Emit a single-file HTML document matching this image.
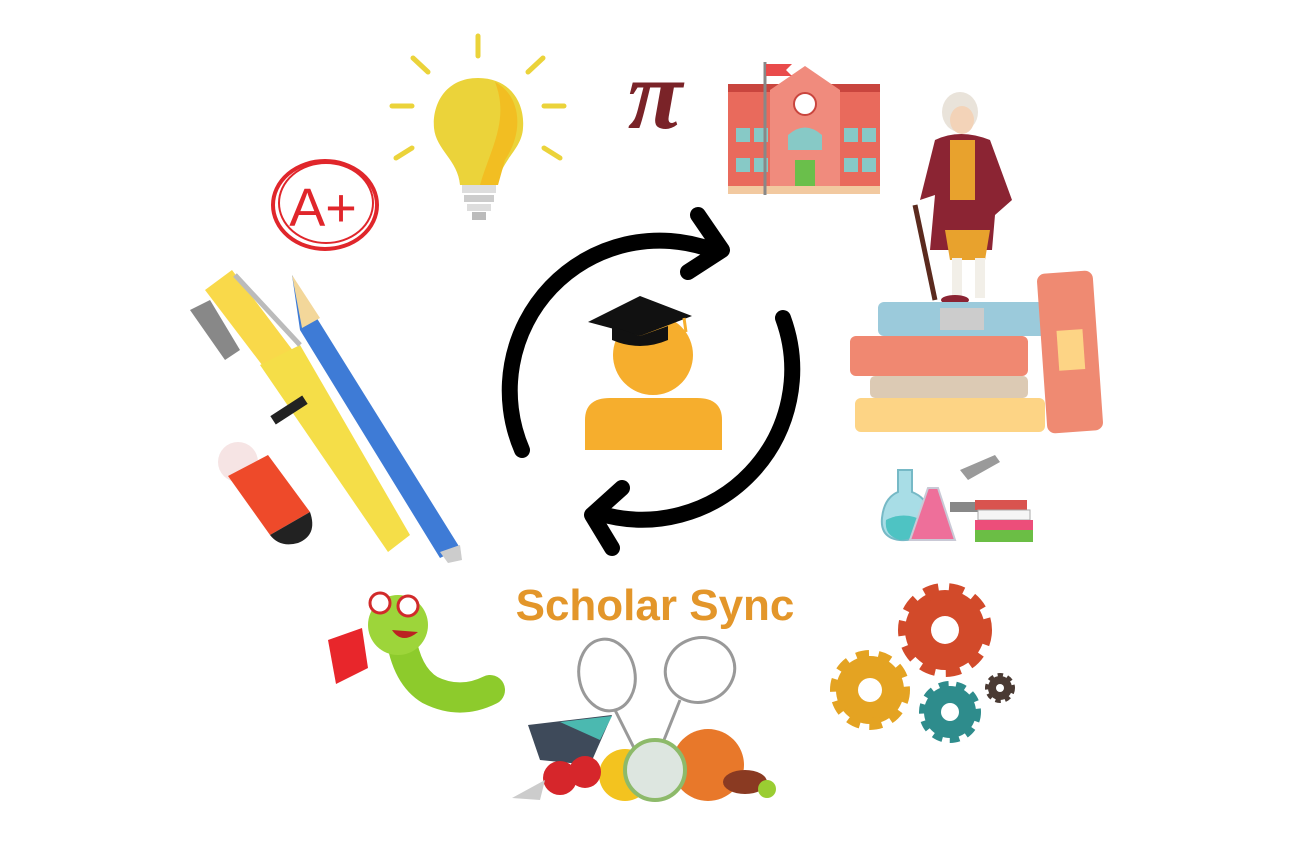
<!DOCTYPE html>
<html><head><meta charset="utf-8"><style>
html,body{margin:0;padding:0;background:#fff;width:1310px;height:865px;overflow:hidden}
svg{display:block}
</style></head><body>
<svg width="1310" height="865" viewBox="0 0 1310 865" xmlns="http://www.w3.org/2000/svg">
<rect width="1310" height="865" fill="#fff"/>

<!-- central arrows -->
<g fill="none" stroke="#000" stroke-width="16" stroke-linecap="round" stroke-linejoin="round">
<path d="M522,450 A150,150 0 0 1 712,250"/>
<path d="M698,215 L722,250 L688,272"/>
<path d="M783,318 A150,150 0 0 1 598,513"/>
<path d="M622,488 L592,515 L612,548"/>
</g>
<!-- person -->
<circle cx="653" cy="355" r="40" fill="#F6AE2D"/>
<path d="M585,450 V420 Q585,398 610,398 H697 Q722,398 722,420 V450 Z" fill="#F6AE2D"/>
<polygon points="588,322 640,296 692,316 640,336" fill="#111"/>
<path d="M612,326 L612,340 Q640,352 668,340 L668,326 L640,336Z" fill="#111"/>
<path d="M684,318 L686,332" stroke="#F6AE2D" stroke-width="3"/>

<!-- title -->
<text x="655" y="620" text-anchor="middle" font-family="Liberation Sans, sans-serif" font-weight="bold" font-size="44" fill="#E3962A">Scholar Sync</text>

<!-- lightbulb -->
<g stroke="#EBD33A" stroke-width="5" stroke-linecap="round">
<line x1="478" y1="36" x2="478" y2="56"/><line x1="413" y1="58" x2="428" y2="72"/><line x1="543" y1="58" x2="528" y2="72"/>
<line x1="392" y1="106" x2="412" y2="106"/><line x1="544" y1="106" x2="564" y2="106"/>
<line x1="396" y1="158" x2="412" y2="148"/><line x1="560" y1="158" x2="544" y2="148"/>
</g>
<path d="M478,78 C445,78 432,105 434,128 C436,150 458,160 460,185 H498 C500,160 522,150 523,128 C525,105 512,78 478,78Z" fill="#EBD33A"/>
<path d="M495,82 C520,95 525,130 505,160 L498,185 H480 C490,150 510,120 495,82Z" fill="#F2BE22"/>
<rect x="462" y="185" width="34" height="8" fill="#ddd"/><rect x="464" y="195" width="30" height="7" fill="#ccc"/><rect x="467" y="204" width="24" height="7" fill="#ddd"/><rect x="472" y="212" width="14" height="8" fill="#bbb"/>

<!-- A+ -->
<ellipse cx="325" cy="205" rx="52" ry="44" fill="none" stroke="#E0262B" stroke-width="4"/>
<ellipse cx="326" cy="203" rx="47" ry="40" fill="none" stroke="#E0262B" stroke-width="2"/>
<text x="323" y="226" text-anchor="middle" font-family="Liberation Sans, sans-serif" font-size="54" fill="#E0262B">A+</text>

<!-- pi -->
<text x="655" y="128" text-anchor="middle" font-family="Liberation Serif, serif" font-style="italic" font-weight="bold" font-size="100" fill="#7A2328">π</text>

<!-- school -->
<rect x="728" y="90" width="152" height="96" fill="#E96A5C"/>
<rect x="728" y="84" width="152" height="8" fill="#C9453E"/>
<polygon points="770,90 805,66 840,90" fill="#F08B7D"/>
<rect x="770" y="90" width="70" height="96" fill="#F08B7D"/>
<circle cx="805" cy="104" r="11" fill="#fff" stroke="#C9453E" stroke-width="2"/>
<path d="M788,150 V135 Q805,120 822,135 V150Z" fill="#87C9C6"/>
<rect x="795" y="160" width="20" height="26" fill="#6ABF4B"/>
<rect x="736" y="128" width="14" height="14" fill="#87C9C6"/><rect x="754" y="128" width="14" height="14" fill="#87C9C6"/>
<rect x="844" y="128" width="14" height="14" fill="#87C9C6"/><rect x="862" y="128" width="14" height="14" fill="#87C9C6"/>
<rect x="736" y="158" width="14" height="14" fill="#87C9C6"/><rect x="754" y="158" width="14" height="14" fill="#87C9C6"/>
<rect x="844" y="158" width="14" height="14" fill="#87C9C6"/><rect x="862" y="158" width="14" height="14" fill="#87C9C6"/>
<rect x="728" y="186" width="152" height="8" fill="#F2C9A0"/>
<line x1="765" y1="62" x2="765" y2="195" stroke="#888" stroke-width="3"/>
<path d="M766,64 H792 L786,70 L792,76 H766Z" fill="#E94B4B"/>

<!-- figure -->
<ellipse cx="960" cy="112" rx="18" ry="20" fill="#E9E3DA"/>
<ellipse cx="962" cy="120" rx="12" ry="14" fill="#F3D3B8"/>
<path d="M935,140 Q960,128 990,140 L1012,200 L995,215 L992,250 H930 L935,195 L920,200 Z" fill="#8B2433"/>
<rect x="950" y="140" width="25" height="60" fill="#E8A22D"/>
<path d="M945,230 H990 L985,260 H950Z" fill="#E8A22D"/>
<rect x="952" y="258" width="10" height="40" fill="#F2EFE8"/><rect x="975" y="258" width="10" height="40" fill="#F2EFE8"/>
<ellipse cx="955" cy="300" rx="14" ry="5" fill="#8B2433"/><ellipse cx="990" cy="310" rx="12" ry="5" fill="#8B2433"/>
<line x1="915" y1="205" x2="935" y2="300" stroke="#5B2A1E" stroke-width="5"/>

<!-- books -->
<rect x="878" y="302" width="170" height="34" rx="6" fill="#9BCADB"/>
<rect x="940" y="308" width="44" height="22" fill="#ccc"/>
<rect x="850" y="336" width="178" height="40" rx="6" fill="#F08871"/>
<rect x="870" y="376" width="158" height="22" rx="5" fill="#DCCAB4"/>
<rect x="855" y="398" width="190" height="34" rx="6" fill="#FDD485"/>
<rect x="1042" y="272" width="56" height="160" rx="8" transform="rotate(-4 1070 352)" fill="#EF8A72"/>
<rect x="1058" y="330" width="26" height="40" fill="#FDD485" transform="rotate(-4 1070 352)"/>

<!-- lab -->
<path d="M898,470 H912 V492 Q932,500 928,522 Q920,542 900,540 Q880,538 882,518 Q884,498 898,492Z" fill="#A8DDE6" stroke="#76B9C6" stroke-width="2"/>
<path d="M886,520 Q905,510 926,522 Q918,540 900,540 Q884,536 886,520Z" fill="#4EC3C3"/>
<path d="M928,488 H938 L955,540 H910Z" fill="#EE6F9A" stroke="#C9C9D6" stroke-width="2"/>
<rect x="950" y="502" width="45" height="10" fill="#888"/>
<path d="M960,470 L995,455 L1000,462 L968,480Z" fill="#9A9A9A"/>
<rect x="975" y="500" width="52" height="10" fill="#D9534F"/><rect x="978" y="510" width="52" height="10" fill="#F5F5F5" stroke="#aaa"/>
<rect x="975" y="520" width="58" height="10" fill="#EC4E7A"/><rect x="975" y="530" width="58" height="12" fill="#6BBE45"/>

<!-- gears -->
<g>
<circle cx="945" cy="630" r="40" fill="#D24A2A" stroke="#D24A2A" stroke-width="14" stroke-dasharray="14 10"/>
<circle cx="945" cy="630" r="14" fill="#fff"/>
<circle cx="870" cy="690" r="34" fill="#E4A322" stroke="#E4A322" stroke-width="12" stroke-dasharray="12 9"/>
<circle cx="870" cy="690" r="12" fill="#fff"/>
<circle cx="950" cy="712" r="26" fill="#2E8C8C" stroke="#2E8C8C" stroke-width="10" stroke-dasharray="9 7"/>
<circle cx="950" cy="712" r="9" fill="#fff"/>
<circle cx="1000" cy="688" r="12" fill="#4A3A33" stroke="#4A3A33" stroke-width="6" stroke-dasharray="5 4"/>
<circle cx="1000" cy="688" r="4" fill="#fff"/>
</g>

<!-- sports -->
<g fill="none" stroke="#999" stroke-width="3">
<ellipse cx="607" cy="675" rx="28" ry="36" transform="rotate(-10 607 675)"/>
<ellipse cx="700" cy="670" rx="35" ry="32" transform="rotate(-20 700 670)"/>
<line x1="615" y1="710" x2="635" y2="750"/><line x1="680" y1="700" x2="660" y2="750"/>
</g>
<polygon points="528,725 612,715 590,765 540,760" fill="#3E4A5A"/>
<polygon points="560,722 612,716 600,740" fill="#4BB9B0"/>
<circle cx="708" cy="765" r="36" fill="#E8782A"/>
<circle cx="625" cy="775" r="26" fill="#F3C31F"/>
<circle cx="655" cy="770" r="30" fill="#DDE6E0" stroke="#8DBA6A" stroke-width="4"/>
<circle cx="560" cy="778" r="17" fill="#D6262B"/><circle cx="585" cy="772" r="16" fill="#D6262B"/>
<ellipse cx="745" cy="782" rx="22" ry="12" fill="#8A3A22"/>
<circle cx="767" cy="789" r="9" fill="#9ACD32"/>
<polygon points="512,798 545,780 540,800" fill="#ccc"/>

<!-- worm -->
<path d="M400,630 Q405,675 430,690 Q460,705 490,690" fill="none" stroke="#8DCB2C" stroke-width="30" stroke-linecap="round"/>
<circle cx="398" cy="625" r="30" fill="#9DD53A"/>
<circle cx="380" cy="603" r="10" fill="#fff" stroke="#D12A2A" stroke-width="3"/><circle cx="408" cy="606" r="10" fill="#fff" stroke="#D12A2A" stroke-width="3"/>
<path d="M392,630 Q402,645 418,632Z" fill="#B22"/>
<polygon points="328,640 362,628 368,668 336,684" fill="#E8262B"/>

<!-- pens -->
<g>
<polygon points="205,290 232,270 300,360 275,382" fill="#F9D94A"/>
<polygon points="260,365 300,345 410,535 388,552" fill="#F5DE48"/>
<rect x="270" y="405" width="38" height="10" fill="#222" transform="rotate(-33 289 410)"/>
<polygon points="190,310 210,300 240,350 225,360" fill="#888"/>
<path d="M235,275 L300,345" stroke="#bbb" stroke-width="5"/>
<polygon points="292,275 318,320 460,548 440,558 300,330" fill="#3E7BD6"/>
<polygon points="292,275 320,318 302,328" fill="#F3D79A"/>
<polygon points="440,552 460,545 462,560 448,563" fill="#ccc"/>
</g>
<!-- eraser -->
<circle cx="238" cy="462" r="20" fill="#F6E4E4"/>
<polygon points="228,476 268,455 310,512 270,535" fill="#EE4A2A"/>
<path d="M270,535 L310,512 Q318,535 298,543 Q280,548 270,535Z" fill="#222"/>
</svg>
</body></html>
